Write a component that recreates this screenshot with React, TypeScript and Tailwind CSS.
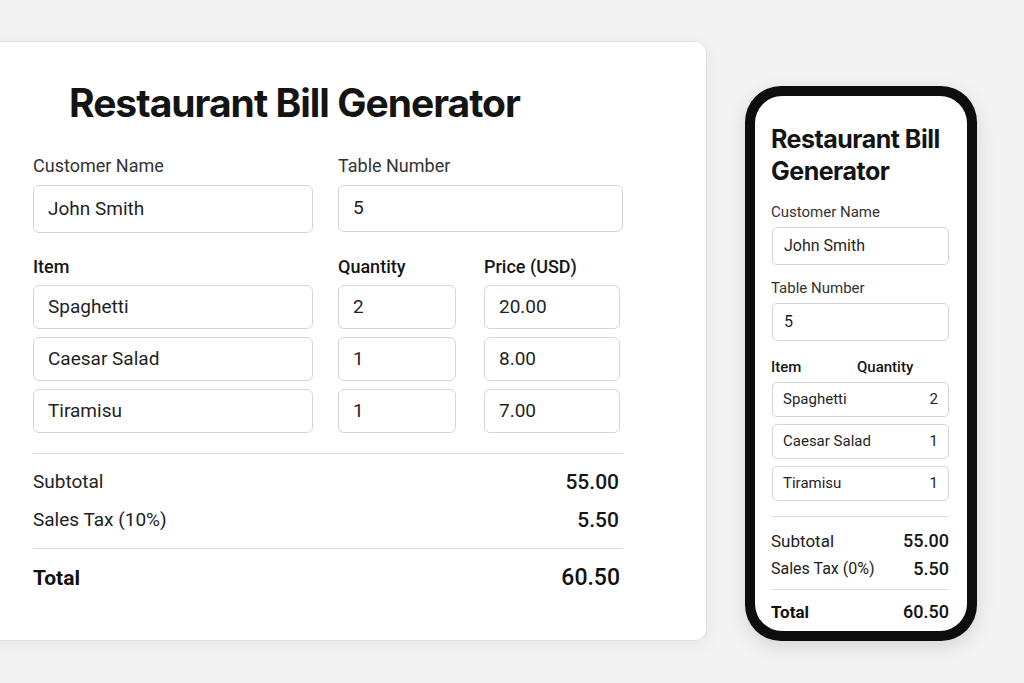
import React from 'react'

// ─── Data ─────────────────────────────────────────────────────────────────────
const ITEMS = [
  { name: 'Spaghetti', qty: '2', price: '20.00' },
  { name: 'Caesar Salad', qty: '1', price: '8.00' },
  { name: 'Tiramisu', qty: '1', price: '7.00' },
]

const BODY = { fontFamily: 'Roboto, "Noto Sans", "Liberation Sans", sans-serif' }
const HEAD = { fontFamily: 'Inter, "Noto Sans", "Liberation Sans", sans-serif' }

// ─── Desktop card ─────────────────────────────────────────────────────────────
function Field({ value, className = '' }: { value: string; className?: string }) {
  return (
    <div className={`flex items-center rounded-md border border-[#d6d6d6] bg-white text-[#1f1f1f] ${className}`}>
      {value}
    </div>
  )
}

function DesktopCard() {
  return (
    <div className="mt-[41px] -ml-[20px] w-[727px] h-[600px] shrink-0 rounded-xl border border-[#e1e1e1] bg-white shadow-[0_4px_18px_rgba(0,0,0,0.06)] pt-[37px] pl-[52px] pr-[83px]">
      <h1 className="pl-[36px] text-[39px] leading-[48px] font-bold tracking-[-1px] text-[#141414]" style={HEAD}>
        Restaurant Bill Generator
      </h1>

      {/* Customer / table */}
      <div className="mt-[27px] grid grid-cols-[280px_285px] gap-x-[25px]">
        <div>
          <div className="text-[18px] leading-[24px] text-[#333]">Customer Name</div>
          <Field value="John Smith" className="mt-[7px] h-[48px] px-[14px] text-[19px]" />
        </div>
        <div>
          <div className="text-[18px] leading-[24px] text-[#333]">Table Number</div>
          <Field value="5" className="mt-[7px] h-[47px] px-[14px] text-[19px]" />
        </div>
      </div>

      {/* Items */}
      <div className="mt-[22px] grid grid-cols-[280px_118px_139px] gap-x-[25px] gap-y-[8px] [&>*:nth-child(3n)]:ml-[3px]">
        <div className="text-[18px] leading-[24px] font-medium text-[#161616] -mb-[2px]">Item</div>
        <div className="text-[18px] leading-[24px] font-medium text-[#161616] -mb-[2px]">Quantity</div>
        <div className="text-[18px] leading-[24px] font-medium text-[#161616] -mb-[2px]">Price (USD)</div>
        {ITEMS.map(it => (
          <React.Fragment key={it.name}>
            <Field value={it.name} className="h-[44px] px-[14px] text-[19px]" />
            <Field value={it.qty} className="h-[44px] px-[14px] text-[19px]" />
            <Field value={it.price} className="h-[44px] px-[14px] text-[19px]" />
          </React.Fragment>
        ))}
      </div>

      {/* Totals */}
      <div className="mt-[20px] border-t border-[#dcdcdc]" />
      <div className="mt-[14px] flex justify-between items-center text-[19px] leading-[28px] text-[#222] pr-[4px]">
        <span>Subtotal</span>
        <span className="font-medium text-[21px] text-[#161616]">55.00</span>
      </div>
      <div className="mt-[10px] flex justify-between items-center text-[19px] leading-[28px] text-[#222] pr-[4px]">
        <span>Sales Tax (10%)</span>
        <span className="font-medium text-[21px] text-[#161616]">5.50</span>
      </div>
      <div className="mt-[14px] border-t border-[#dcdcdc]" />
      <div className="mt-[14px] flex justify-between items-center text-[21px] leading-[30px] font-bold text-[#111] pr-[3px]">
        <span>Total</span>
        <span className="font-medium text-[23px]">60.50</span>
      </div>
    </div>
  )
}

// ─── Phone mockup ─────────────────────────────────────────────────────────────
function PhoneField({ children, className = '' }: { children: React.ReactNode; className?: string }) {
  return (
    <div className={`flex items-center rounded-[5px] border border-[#d6d6d6] bg-white text-[#1f1f1f] ${className}`}>
      {children}
    </div>
  )
}

function Phone() {
  return (
    <div className="mt-[86px] ml-[38px] w-[232px] h-[555px] shrink-0 rounded-[36px] bg-[#0d0d0d] p-[10px] shadow-[0_6px_20px_rgba(0,0,0,0.12)]">
      <div className="h-full rounded-[27px] bg-white pt-[27px] pl-[16px] pr-[18px] overflow-hidden">
        <h2 className="text-[25px] leading-[32px] font-bold tracking-[-0.5px] text-[#141414] whitespace-nowrap" style={HEAD}>
          Restaurant Bill<br />Generator
        </h2>

        <div className="mt-[15px] text-[15px] leading-[20px] text-[#333]">Customer Name</div>
        <PhoneField className="mt-[5px] ml-[1px] h-[38px] px-[11px] text-[16px]">John Smith</PhoneField>

        <div className="mt-[13px] text-[15px] leading-[20px] text-[#333]">Table Number</div>
        <PhoneField className="mt-[5px] ml-[1px] h-[38px] px-[11px] text-[16px]">5</PhoneField>

        <div className="mt-[16px] flex text-[15px] leading-[20px] font-medium text-[#161616]">
          <span className="w-[86px]">Item</span>
          <span>Quantity</span>
        </div>
        <div className="mt-[5px] flex flex-col gap-[7px] ml-[1px]">
          {ITEMS.map(it => (
            <PhoneField key={it.name} className="h-[35px] px-[10px] justify-between text-[15px]">
              <span>{it.name}</span>
              <span>{it.qty}</span>
            </PhoneField>
          ))}
        </div>

        <div className="mt-[15px] border-t border-[#dcdcdc]" />
        <div className="mt-[12px] flex justify-between items-center text-[17px] leading-[24px] text-[#222]">
          <span>Subtotal</span>
          <span className="font-medium text-[18px] text-[#161616]">55.00</span>
        </div>
        <div className="mt-[4px] flex justify-between items-center text-[16px] leading-[24px] text-[#222]">
          <span>Sales Tax (0%)</span>
          <span className="font-medium text-[18px] text-[#161616]">5.50</span>
        </div>
        <div className="mt-[8px] border-t border-[#dcdcdc]" />
        <div className="mt-[10px] flex justify-between items-center text-[17px] leading-[24px] font-bold text-[#111]">
          <span>Total</span>
          <span className="font-medium text-[18px]">60.50</span>
        </div>
      </div>
    </div>
  )
}

export default function App() {
  return (
    <div className="w-[1024px] h-[683px] overflow-hidden bg-[#f3f3f3] flex items-start" style={BODY}>
      <DesktopCard />
      <Phone />
    </div>
  )
}
